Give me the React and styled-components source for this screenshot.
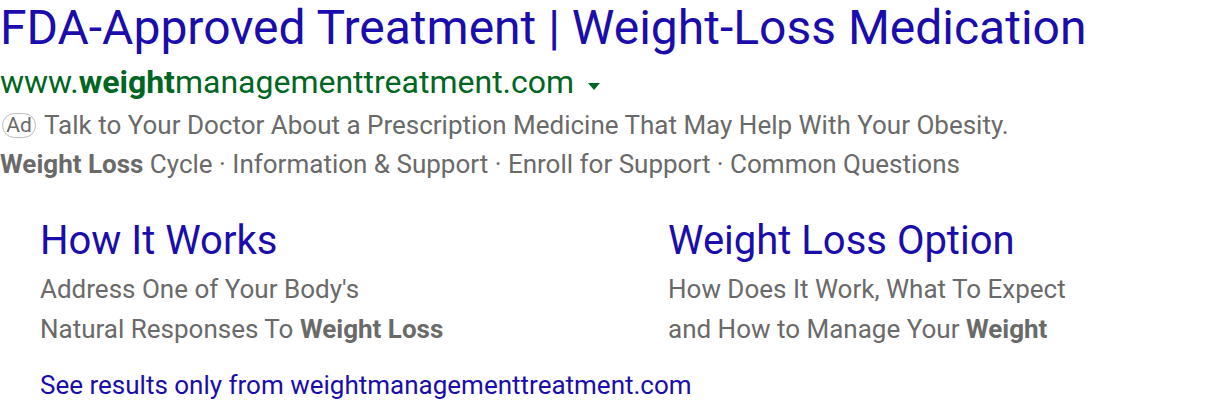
import React from "react";
import styled, { createGlobalStyle } from "styled-components";

const Global = createGlobalStyle`
  html, body { margin: 0; padding: 0; background: #fff; }
  body { font-family: Roboto, "Noto Sans", Arial, sans-serif; }
`;

const Ad = styled.div`
  width: 1216px;
  height: 408px;
  overflow: hidden;
  font-family: Roboto, Arial, sans-serif;
`;

const Title = styled.div`
  color: #1a0dab;
  font-size: 48px;
  line-height: 56px;
  white-space: nowrap;
`;

const UrlRow = styled.div`
  display: flex;
  align-items: center;
  gap: 14px;
  color: #006621;
  font-size: 32px;
  line-height: 52px;
  white-space: nowrap;
  b { font-weight: 700; }
`;

const Caret = styled.span`
  width: 0;
  height: 0;
  border-left: 6px solid transparent;
  border-right: 6px solid transparent;
  border-top: 7px solid #006621;
  margin-top: 8px;
`;

const Desc = styled.div`
  color: #6a6a6a;
  font-size: 26px;
  line-height: ${(p) => p.$lh}px;
  margin-top: ${(p) => p.$mt || 0}px;
  white-space: nowrap;
  display: flex;
  align-items: center;
  b { font-weight: 700; }
`;

const Badge = styled.span`
  display: inline-flex;
  align-items: center;
  justify-content: center;
  border: 1px solid #bdbdbd;
  border-radius: 13px;
  color: #6a6a6a;
  font-size: 21px;
  line-height: 1;
  height: 25px;
  width: 34px;
  margin: 0 8px 0 2px;
  box-sizing: border-box;
`;

const Sitelinks = styled.div`
  display: grid;
  grid-template-columns: 628px 1fr;
  padding-left: 40px;
  margin-top: 33px;
`;

const Site = styled.div`
  display: flex;
  flex-direction: column;
`;

const SiteTitle = styled.div`
  color: #1a0dab;
  font-size: 40px;
  line-height: 48px;
  margin-bottom: 4px;
  white-space: nowrap;
`;

const SiteLine = styled.div`
  color: #6a6a6a;
  font-size: 26px;
  line-height: 40px;
  white-space: nowrap;
  b { font-weight: 700; }
`;

const More = styled.div`
  color: #1a0dab;
  font-size: 26px;
  line-height: 40px;
  padding-left: 40px;
  margin-top: 16px;
  white-space: nowrap;
`;

export default function App() {
  return (
    <Ad>
      <Global />
      <Title>FDA-Approved Treatment | Weight-Loss Medication</Title>
      <UrlRow>
        <span>
          www.<b>weight</b>managementtreatment.com
        </span>
        <Caret />
      </UrlRow>
      <Desc $lh={34}>
        <Badge>Ad</Badge>
        Talk to Your Doctor About a Prescription Medicine That May Help With Your Obesity.
      </Desc>
      <Desc $lh={40} $mt={2}>
        <span>
          <b>Weight Loss</b> Cycle · Information &amp; Support · Enroll for Support · Common Questions
        </span>
      </Desc>
      <Sitelinks>
        <Site>
          <SiteTitle>How It Works</SiteTitle>
          <SiteLine>Address One of Your Body's</SiteLine>
          <SiteLine>
            Natural Responses To <b>Weight Loss</b>
          </SiteLine>
        </Site>
        <Site>
          <SiteTitle>Weight Loss Option</SiteTitle>
          <SiteLine>How Does It Work, What To Expect</SiteLine>
          <SiteLine>
            and How to Manage Your <b>Weight</b>
          </SiteLine>
        </Site>
      </Sitelinks>
      <More>See results only from weightmanagementtreatment.com</More>
    </Ad>
  );
}
